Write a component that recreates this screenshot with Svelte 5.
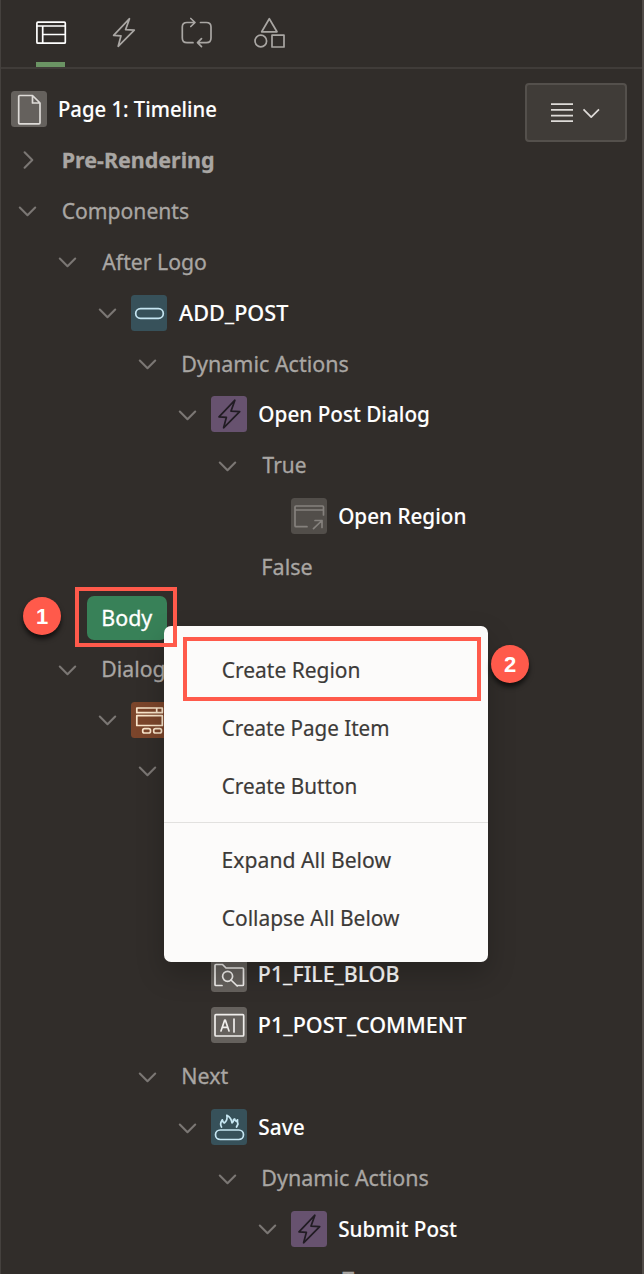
<script>
  // level: tree depth; ink/width: left edge and drawn width of the label glyphs
  const rows = [
    { text: 'Pre-Rendering', level: 0, arrow: 'right', ink: 62.4, width: 151, bold: true },
    { text: 'Components', level: 0, arrow: 'down', ink: 62.3, width: 126 },
    { text: 'After Logo', level: 1, arrow: 'down', ink: 102, width: 104.3 },
    { text: 'ADD_POST', level: 2, arrow: 'down', icon: 'button', ink: 178.7, width: 110 },
    { text: 'Dynamic Actions', level: 3, arrow: 'down', ink: 183, width: 165 },
    { text: 'Open Post Dialog', level: 4, arrow: 'down', icon: 'bolt', ink: 259, width: 169 },
    { text: 'True', level: 5, arrow: 'down', ink: 262.3, width: 43.5 },
    { text: 'Open Region', level: 6, icon: 'open', ink: 338.8, width: 126.5 },
    { text: 'False', level: 5, ink: 263, width: 49 },
    { text: 'Body', level: 1, selected: true, ink: 102.9, width: 49.8 },
    { text: 'Dialogs', level: 1, arrow: 'down', ink: 103, width: 72 },
    { text: '', level: 2, arrow: 'down', icon: 'dialog' },
    { text: '', level: 3, arrow: 'down' },
    { text: '', level: 4 },
    { text: '', level: 4 },
    { text: '', level: 4 },
    { text: 'P1_FILE_BLOB', level: 4, icon: 'file', ink: 259.5, width: 139.3 },
    { text: 'P1_POST_COMMENT', level: 4, icon: 'field', ink: 259.5, width: 207.3 },
    { text: 'Next', level: 3, arrow: 'down', ink: 183, width: 45 },
    { text: 'Save', level: 4, arrow: 'down', icon: 'hot', ink: 259, width: 44.7 },
    { text: 'Dynamic Actions', level: 5, arrow: 'down', ink: 263, width: 165 },
    { text: 'Submit Post', level: 6, arrow: 'down', icon: 'bolt', ink: 338.8, width: 117.5 },
    { text: 'True', level: 7, arrow: 'down', ink: 342.3, width: 43.5 }
  ];

  const menu = [
    { text: 'Create Region', width: 136.3 },
    { text: 'Create Page Item', width: 165.3 },
    { text: 'Create Button', width: 133 },
    { text: 'Expand All Below', width: 168.2, ink: 223.2, divided: true },
    { text: 'Collapse All Below', width: 177.5 }
  ];

  const ctx = document.createElement('canvas').getContext('2d');

  // Condenses a label so its glyphs span the given width from the given edge
  function fit(node, { ink, width, rise = 1.24 }) {
    if (!width) return;
    const style = getComputedStyle(node);
    ctx.font = `${style.fontWeight} ${style.fontSize} ${style.fontFamily}`;
    const m = ctx.measureText(node.textContent);
    const scale = width / (m.actualBoundingBoxRight + m.actualBoundingBoxLeft);
    const left = node.getBoundingClientRect().left;
    node.style.transform = `translate(${ink + 0.3 - left + m.actualBoundingBoxLeft * scale}px, ${-rise}px) scaleX(${scale})`;
  }
</script>

{#snippet bolt()}
  <path d="M129.5 18.7 113.6 35.3 121 35.8 118.2 46.3 134.3 30.2 125.6 29.6Z" />
{/snippet}

<main>
  <nav>
    <svg class="active" viewBox="33 15 36 36"><rect x="36.9" y="22.2" width="28.4" height="21" rx="1" /><path d="M37 26H65M42.7 26V43M42.7 34.5H65" /></svg>
    <svg viewBox="106 15 36 36">{@render bolt()}</svg>
    <svg viewBox="179 15 36 36"><path d="M194.5 22.5H187Q182.3 22.5 182.3 27V38Q182.3 42.7 187 42.7H193M190.8 18.5 195 22.5 190.8 26.5M200.5 22.5H206.3Q211 22.5 211 27V38Q211 42.7 206.3 42.7H198M201.5 38.7 197.5 42.7 201.5 46.7" /></svg>
    <svg viewBox="252 15 36 36"><path d="M269.3 18.7 277 31.8H261.7Z" /><circle cx="260.8" cy="41" r="5.8" /><rect x="272" y="35.2" width="12" height="11.8" /></svg>
  </nav>

  <section>
    <div class="row page">
      <span class="tile gray"><svg viewBox="0 0 36 36"><path d="M7.7 5.5Q7.7 4.5 8.7 4.5H21.5L29 12V31.8Q29 32.8 28 32.8H8.7Q7.7 32.8 7.7 31.8ZM21.5 4.5V12H29" /></svg></span>
      <span class="label strong" use:fit={{ ink: 59.5, width: 156.5 }}>Page 1: Timeline</span>
      <button aria-label="Menu"><svg viewBox="0 0 54 24" width="54" height="24"><path d="M1 3.2H23M1 8.8H23M1 14.6H23M1 20.1H23" /><path d="M33.5 8.4 41.2 16.2 49 8.4" /></svg></button>
    </div>

    {#each rows as row}
      <div class="row" class:selected={row.selected} style:--level={row.level}>
        <svg class="arrow" viewBox="0 0 17 17">
          {#if row.arrow === 'down'}<path d="M.8 5.6 8.5 13.2 16.2 5.6" />{/if}
          {#if row.arrow === 'right'}<path d="M5.6 1.3 13.3 9 5.6 16.7" />{/if}
        </svg>
        {#if row.icon}
          <span class="tile {row.icon}">
            <svg viewBox="0 0 36 36">
              {#if row.icon === 'button'}
                <rect x="4.7" y="13.6" width="27.6" height="9.7" rx="4.8" />
              {:else if row.icon === 'bolt'}
                <g transform="translate(-105.6 -14.5)">{@render bolt()}</g>
              {:else if row.icon === 'open'}
                <path d="M16 28.7H5Q4 28.7 4 27.7V9Q4 8 5 8H31.5Q32.5 8 32.5 9V17M4 12H32.5M22.5 30.7 31 22.5M24 22.5H31V29.5" />
              {:else if row.icon === 'dialog'}
                <path d="M5.8 6H31.3V10.7H5.8ZM25.7 6V10.7M5.8 13.7H31.3V23.5H5.8Z" /><rect x="11.7" y="26.7" width="7.8" height="4.3" rx="1.8" /><rect x="22.7" y="26.7" width="7.8" height="4.3" rx="1.8" />
              {:else if row.icon === 'file'}
                <path d="M11 29.5H5Q4 29.5 4 28.5V9.5Q4 8.5 5 8.5H11.5L15 12H31.5Q32.5 12 32.5 13V28.5Q32.5 29.5 31.5 29.5H26M20 24 26.2 30" /><circle cx="16.6" cy="20.3" r="5" />
              {:else if row.icon === 'field'}
                <rect x="4" y="7.7" width="28.7" height="21.3" rx="1" /><path d="M10 24 13.7 13H14.3L18 24M11.4 20.3H16.6M23 12V25" />
              {:else if row.icon === 'hot'}
                <rect x="4.5" y="21" width="28" height="9.5" rx="4.7" /><path d="M10.5 18Q8.5 15 11.3 10.8Q12 13.5 13.3 14Q17 11 15.8 6.3Q20.5 9 21 14Q22.7 13.2 22.5 10.5L23.7 10Q24 12 25.5 12.5L26.5 10.8Q26.3 14 27 15L25.5 18" />
              {/if}
            </svg>
          </span>
        {/if}
        {#if row.text}
          <span class="label" class:strong={row.icon} class:bold={row.bold} use:fit={row}>{row.text}</span>
        {/if}
      </div>
    {/each}
  </section>

  <div class="menu">
    {#each menu as item}
      <div class="item" class:divided={item.divided}><span use:fit={{ ink: item.ink ?? 222.4, width: item.width, rise: 1 }}>{item.text}</span></div>
    {/each}
  </div>

  <div class="frame body-frame"></div>
  <div class="frame region-frame"></div>
  <div class="badge one">1</div>
  <div class="badge two">2</div>
</main>

<style>
  :global(body) { background: #312d2a; overflow: hidden; }
  main {
    position: relative;
    box-sizing: border-box;
    height: 1274px;
    overflow: hidden;
    background: #312d2a;
    border-left: 1px solid #45413e;
    border-right: 2px solid #504b47;
    font: 22px "Noto Sans", sans-serif;
    color: #a9a6a3;
  }
  svg { fill: none; stroke: currentColor; stroke-width: 1.7; stroke-linejoin: round; stroke-linecap: round; flex: none; }
  nav {
    display: flex;
    gap: 37px;
    box-sizing: border-box;
    height: 69px;
    padding: 15px 0 0 32px;
    border-bottom: 2px solid #403c39;
  }
  nav svg { width: 36px; height: 36px; overflow: visible; }
  nav .active {
    padding-bottom: 16px;
    background: linear-gradient(#6b9464, #6b9464) 3px 100% / 29px 5px no-repeat;
    color: #fff;
  }
  section { padding-top: 14.6px; }
  .row {
    display: flex;
    align-items: center;
    height: 50.91px;
    padding-left: calc(18px + var(--level) * 40px);
  }
  .page { padding: 0 15px 0 10px; }
  .page button {
    align-self: flex-start;
    margin-top: -.6px;
    margin-left: auto;
    width: 102px;
    height: 59px;
    padding: 0 0 0 2px;
    background: #403c38;
    border: 2px solid #54504c;
    border-radius: 4px;
    color: #dedbd8;
  }
  .page button svg { stroke-linecap: butt; display: block; margin: auto; }
  .arrow { width: 17px; height: 17px; overflow: visible; color: #7b7774; stroke-width: 2.1; }
  .tile {
    flex: none;
    width: 36px;
    height: 36px;
    margin-left: 15px;
    border-radius: 3.5px;
    color: #f0eeec;
    background: #65615d;
  }
  .page .tile { margin-left: 0; color: #dedbd8; }
  .tile svg { display: block; width: 36px; height: 36px; }
  .button, .hot { background: #37515a; color: #c6e6f2; }
  .bolt { background: #67526f; color: #211c23; }
  .open { background: #524e4a; color: #85817d; }
  .dialog { background: #7b452b; color: #fae6cc; }
  .label { white-space: nowrap; line-height: 30px; transform-origin: 0 50%; -webkit-text-stroke: .3px currentColor; }
  .strong { color: #fff; font-weight: 500; -webkit-text-stroke-width: .12px; }
  .bold { font-weight: 700; }
  .selected .label { position: relative; color: #fff; }
  .selected { position: relative; }
  .selected::before {
    content: "";
    position: absolute;
    left: 86px;
    top: 3.4px;
    width: 80px;
    height: 44px;
    border-radius: 7px;
    background: #388158;
  }
  .menu {
    position: absolute;
    left: 163px;
    top: 626px;
    box-sizing: border-box;
    width: 324px;
    height: 336px;
    padding: 15px 0;
    border-radius: 7px;
    background: #fcfbfa;
    box-shadow: 0 12px 28px rgba(0, 0, 0, .22);
    color: #3c3a38;
  }
  .item { height: 58px; line-height: 58px; padding-left: 58px; }
  .item span { display: inline-block; white-space: nowrap; transform-origin: 0 50%; -webkit-text-stroke: .2px currentColor; }
  .divided { margin-top: 7px; border-top: 1px solid #e2e1df; padding-top: 8px; }
  .frame { position: absolute; box-sizing: border-box; border: 4px solid #ff5a4b; }
  .body-frame { left: 74px; top: 587px; width: 102px; height: 60px; }
  .region-frame { left: 182px; top: 637px; width: 298px; height: 64px; }
  .badge {
    position: absolute;
    width: 38px;
    height: 38px;
    border-radius: 50%;
    background: #ff5a4b;
    box-shadow: 0 4px 5px rgba(0, 0, 0, .65);
    color: #fff;
    font: 700 22px/39px "Liberation Sans", sans-serif;
    text-align: center;
  }
  .one { left: 22px; top: 597px; }
  .two { left: 490px; top: 645px; }
</style>
